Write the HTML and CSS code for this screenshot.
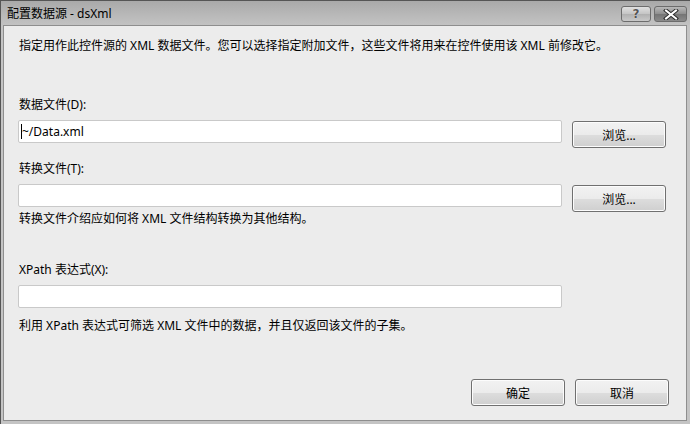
FILE: index.html
```html
<!DOCTYPE html>
<html lang="zh-CN">
<head>
<meta charset="utf-8">
<title>配置数据源 - dsXml</title>
<link rel="stylesheet" href="styles.css">
</head>
<body>
<div class="window">
  <div class="titlebar">
    <span class="title">配置数据源 - dsXml</span>
    <div class="caption-buttons">
      <div class="cap-btn help"><span class="q">?</span></div>
      <div class="cap-btn close">
        <svg width="16" height="11" viewBox="0 0 16 11">
          <path d="M3 1.5 L13 9.5 M13 1.5 L3 9.5" stroke="#2a2a2a" stroke-width="4" stroke-linecap="square"/>
          <path d="M3 1.5 L13 9.5 M13 1.5 L3 9.5" stroke="#ffffff" stroke-width="2" stroke-linecap="square"/>
        </svg>
      </div>
    </div>
  </div>
  <div class="client">
    <p class="desc">指定用作此控件源的 XML 数据文件。您可以选择指定附加文件，这些文件将用来在控件使用该 XML 前修改它。</p>

    <div class="label l-data">数据文件(D):</div>
    <div class="row">
      <div class="input"><span class="caret"></span>~/Data.xml</div>
      <button class="btn browse">浏览...</button>
    </div>

    <div class="label l-trans">转换文件(T):</div>
    <div class="row">
      <div class="input"></div>
      <button class="btn browse">浏览...</button>
    </div>
    <p class="hint h-trans">转换文件介绍应如何将 XML 文件结构转换为其他结构。</p>

    <div class="label l-xpath">XPath 表达式(X):</div>
    <div class="row">
      <div class="input"></div>
    </div>
    <p class="hint h-xpath">利用 XPath 表达式可筛选 XML 文件中的数据，并且仅返回该文件的子集。</p>

    <div class="footer">
      <button class="btn">确定</button>
      <button class="btn">取消</button>
    </div>
  </div>
</div>
</body>
</html>
```

FILE: styles.css
```css
* { box-sizing: border-box; }
html, body { margin: 0; padding: 0; }
body {
  width: 690px;
  height: 424px;
  overflow: hidden;
  font-family: "Noto Sans", "Noto Sans CJK SC", sans-serif;
  font-size: 12px;
  color: #000;
}
.window {
  width: 690px;
  height: 424px;
  border: 1px solid #555;
  border-bottom: none;
  border-right: none;
  background: #c4c4c4;
  display: flex;
  flex-direction: column;
}
.titlebar {
  height: 24px;
  flex: none;
  display: flex;
  align-items: center;
  padding: 2px 3px 0 6px;
  background: linear-gradient(#a9a9a9, #b9b9b9 60%, #c2c2c2);
}
.title {
  font-family: "Noto Sans", "Noto Sans CJK SC", sans-serif;
  font-size: 12px;
  line-height: 16px;
  color: #000;
}
.caption-buttons {
  margin-left: auto;
  display: flex;
  gap: 3px;
  align-self: flex-start;
  margin-top: 3px;
}
.cap-btn {
  height: 16px;
  border: 1px solid #6c6c6c;
  border-radius: 3px;
  display: flex;
  align-items: center;
  justify-content: center;
}
.help {
  width: 30px;
  background: linear-gradient(#e0e0e0, #c4c4c4 50%, #b0b0b0 51%, #c8c8c8);
}
.help .q {
  font-family: "DejaVu Sans", sans-serif;
  font-weight: bold;
  font-size: 12px;
  line-height: 12px;
  color: #555;
  text-shadow: 0 0 1px #fff;
}
.close {
  width: 33px;
  background: linear-gradient(#b8b8b8, #8e8e8e 50%, #747474 51%, #8a8a8a);
}
.client {
  flex: 1;
  margin: 0 3px 3px 2px;
  border: 1px solid #8e8e8e;
  background: #ececec;
  padding: 12px 17px 14px 14px;
  display: flex;
  flex-direction: column;
}
.desc, .hint, .label {
  margin: 0;
  line-height: 16px;
  white-space: nowrap;
  padding-left: 1px;
}
.l-data { margin-top: 43px; }
.l-trans { margin-top: 18px; }
.l-xpath { margin-top: 35px; }
.h-trans { margin-top: 4px; }
.h-xpath { margin-top: 10px; }
.row {
  display: flex;
  align-items: flex-start;
  margin-top: 7px;
}
.input {
  width: 544px;
  height: 23px;
  background: #fff;
  border: 1px solid #c9c9c9;
  border-radius: 2px;
  padding: 0 2px;
  line-height: 21px;
  display: flex;
  align-items: center;
}
.caret {
  width: 1px;
  height: 15px;
  background: #000;
}
.btn {
  font-family: "Noto Sans", "Noto Sans CJK SC", sans-serif;
  font-size: 12px;
  color: #000;
  width: 94px;
  height: 27px;
  border: 1px solid #707070;
  border-radius: 3px;
  background: linear-gradient(#f2f2f2, #ebebeb 50%, #dddddd 51%, #cfcfcf);
  box-shadow: inset 0 0 0 1px #fcfcfc;
  padding: 0;
}
.browse {
  margin-left: 10px;
  margin-top: 1px;
  margin-bottom: -5px;
}
.footer {
  margin-top: auto;
  display: flex;
  justify-content: flex-end;
  gap: 10px;
}
```
